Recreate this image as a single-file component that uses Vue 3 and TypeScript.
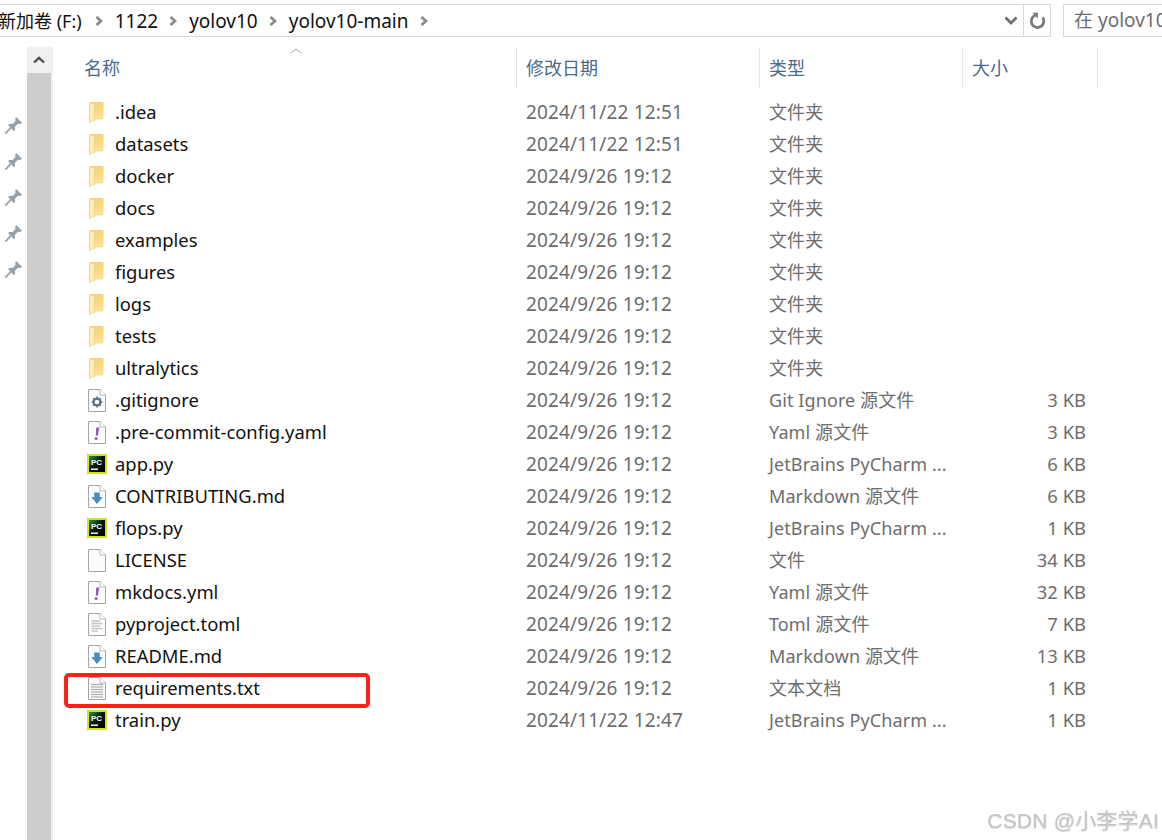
<script setup lang="ts">
interface Row {
  name: string
  date: string
  type: string
  size: string
  icon: string
  marked?: boolean
}
const folderDates: [string, string][] = [
  ['.idea', '2024/11/22 12:51'],
  ['datasets', '2024/11/22 12:51'],
  ['docker', '2024/9/26 19:12'],
  ['docs', '2024/9/26 19:12'],
  ['examples', '2024/9/26 19:12'],
  ['figures', '2024/9/26 19:12'],
  ['logs', '2024/9/26 19:12'],
  ['tests', '2024/9/26 19:12'],
  ['ultralytics', '2024/9/26 19:12'],
]
const d = '2024/9/26 19:12'
const pc = 'JetBrains PyCharm ...'
const rows: Row[] = [
  ...folderDates.map(([name, date]) => ({ name, date, type: '文件夹', size: '', icon: 'folder' })),
  { name: '.gitignore', date: d, type: 'Git Ignore 源文件', size: '3 KB', icon: 'gear' },
  { name: '.pre-commit-config.yaml', date: d, type: 'Yaml 源文件', size: '3 KB', icon: 'bang' },
  { name: 'app.py', date: d, type: pc, size: '6 KB', icon: 'pc' },
  { name: 'CONTRIBUTING.md', date: d, type: 'Markdown 源文件', size: '6 KB', icon: 'md' },
  { name: 'flops.py', date: d, type: pc, size: '1 KB', icon: 'pc' },
  { name: 'LICENSE', date: d, type: '文件', size: '34 KB', icon: 'blank' },
  { name: 'mkdocs.yml', date: d, type: 'Yaml 源文件', size: '32 KB', icon: 'bang' },
  { name: 'pyproject.toml', date: d, type: 'Toml 源文件', size: '7 KB', icon: 'toml' },
  { name: 'README.md', date: d, type: 'Markdown 源文件', size: '13 KB', icon: 'md' },
  { name: 'requirements.txt', date: d, type: '文本文档', size: '1 KB', icon: 'txt', marked: true },
  { name: 'train.py', date: '2024/11/22 12:47', type: pc, size: '1 KB', icon: 'pc' },
]
const crumbs = ['1122', 'yolov10', 'yolov10-main']
const pins = [0, 1, 2, 3, 4]
const headers = [
  { label: '名称', cls: 'h-name' },
  { label: '修改日期', cls: 'h-date' },
  { label: '类型', cls: 'h-type' },
  { label: '大小', cls: 'h-size' },
]
const fileTypes = ['gear', 'bang', 'md', 'blank', 'toml', 'txt']
const lines = [6, 8.5, 11, 13.5, 16, 18.5]
</script>

<template>
  <div class="page">
    <div class="topbar">
      <div class="address">
        <div class="crumbs">
          <span class="crumb drive">新加卷 (F:)</span>
          <svg class="sep" viewBox="0 0 8 10"><path d="M1.5 1 L6 5 L1.5 9" fill="none" stroke="#8a8a8a" stroke-width="2.8" /></svg>
          <template v-for="c in crumbs" :key="c">
            <span class="crumb">{{ c }}</span>
            <svg class="sep" viewBox="0 0 8 10"><path d="M1.5 1 L6 5 L1.5 9" fill="none" stroke="#8a8a8a" stroke-width="2.8" /></svg>
          </template>
        </div>
        <svg class="chev" viewBox="0 0 14 9"><path d="M1.5 1.5 L7 7 L12.5 1.5" fill="none" stroke="#6f6f6f" stroke-width="2.8" /></svg>
        <div class="refresh">
          <svg viewBox="0 0 18 18" width="18" height="18">
            <path d="M7.5 3.2 A6.3 6.3 0 1 0 14.6 5.4" fill="none" stroke="#7c7c7c" stroke-width="2.8" />
            <path d="M4.2 0.8 L10 0.8 L10 6.6 Z" fill="#7c7c7c" />
          </svg>
        </div>
      </div>
      <div class="search">在 yolov10</div>
    </div>

    <div class="body">
      <div class="pins">
        <svg v-for="p in pins" :key="p" class="pin" viewBox="0 0 16 16">
          <path d="M9.8 0.8 L15.2 6 L13.6 7 L11.6 6.8 L8.8 9.6 L9 12.6 L7.8 13.4 L2.8 8.2 L3.6 7 L6.6 7.2 L9.4 4.4 L9 2.4 Z" fill="#96a0a8" />
          <path d="M5 10.6 L0.8 15.2 L1.2 15.6" fill="none" stroke="#96a0a8" stroke-width="1.6" />
        </svg>
      </div>

      <div class="scrollbar">
        <div class="scroll-up">
          <svg viewBox="0 0 12 8" width="12" height="8"><path d="M1 6.5 L6 1.8 L11 6.5" fill="none" stroke="#505050" stroke-width="2.4" /></svg>
        </div>
        <div class="scroll-thumb"></div>
      </div>

      <div class="list">
        <div class="header">
          <svg class="sort" viewBox="0 0 12 6"><path d="M0.5 5.5 L6 0.8 L11.5 5.5" fill="none" stroke="#9aa0a6" stroke-width="1" /></svg>
          <div v-for="h in headers" :key="h.label" class="hcell" :class="h.cls">{{ h.label }}</div>
        </div>
        <div class="rows">
          <div v-for="r in rows" :key="r.name" class="row">
            <div class="ico">
              <svg v-if="r.icon === 'folder'" width="16" height="22" viewBox="0 0 16 22">
                <defs>
                  <linearGradient id="fg" x1="0" y1="0" x2="0" y2="1">
                    <stop offset="0" stop-color="#f6d27a" />
                    <stop offset="1" stop-color="#fbe296" />
                  </linearGradient>
                </defs>
                <path d="M0.5 1 H14.5 V18.5 H0.5 Z" fill="url(#fg)" />
                <path d="M0.5 1.5 L5.5 3 V18.5 L5.5 19 L0.5 21.5 Z" fill="#fdeeb5" stroke="#f0cd72" stroke-width="0.7" />
              </svg>

              <svg v-else-if="fileTypes.includes(r.icon)" width="18" height="23" viewBox="0 0 18 23">
                <path d="M0.5 0.5 H12 L17.5 6 V22.5 H0.5 Z" fill="#fbfcfc" stroke="#a3a6a8" />
                <path d="M12 0.5 V6 H17.5" fill="#fff" stroke="#b5b8ba" />
                <template v-if="r.icon === 'gear'">
                  <circle cx="9" cy="13" r="3.4" fill="none" stroke="#5e7180" stroke-width="2.2" />
                  <path d="M9 7.6 V18.4 M3.6 13 H14.4 M5.2 9.2 L12.8 16.8 M12.8 9.2 L5.2 16.8" stroke="#5e7180" stroke-width="1.6" stroke-dasharray="1.8 7.2" />
                </template>
                <template v-else-if="r.icon === 'bang'">
                  <path d="M8.2 6.5 H11.4 L9.8 14.8 H7.8 Z" fill="#8e5cb8" />
                  <circle cx="8.1" cy="17.6" r="1.5" fill="#8e5cb8" />
                </template>
                <template v-else-if="r.icon === 'md'">
                  <path d="M6.2 7.5 H11.8 V12 H14.8 L9 19 L3.2 12 H6.2 Z" fill="#4f8db8" />
                </template>
                <template v-else-if="r.icon === 'toml'">
                  <path d="M3.5 8 H12 M3.5 10.5 H14.5 M3.5 13 H12 M3.5 15.5 H14.5 M3.5 18 H10" stroke="#c3c6c8" stroke-width="1.3" />
                </template>
                <template v-else-if="r.icon === 'txt'">
                  <path v-for="y in lines" :key="y" :d="`M3 ${y + 1.5} H15`" stroke="#a9acae" stroke-width="1.2" />
                </template>
              </svg>

              <svg v-else width="20" height="20" viewBox="0 0 20 20">
                <defs>
                  <linearGradient id="pg" x1="0" y1="0" x2="1" y2="1">
                    <stop offset="0" stop-color="#17a34a" />
                    <stop offset="0.45" stop-color="#07180e" />
                    <stop offset="1" stop-color="#000" />
                  </linearGradient>
                </defs>
                <rect x="0" y="0" width="20" height="20" fill="#d6e02a" />
                <rect x="2" y="2" width="16" height="16" fill="url(#pg)" />
                <text x="4" y="10.5" class="pc-text">PC</text>
                <rect x="4" y="14.5" width="7" height="1.4" fill="#fff" />
              </svg>
            </div>
            <div class="cell c-name">{{ r.name }}</div>
            <div class="cell c-date">{{ r.date }}</div>
            <div class="cell c-type">{{ r.type }}</div>
            <div class="cell c-size">{{ r.size }}</div>
            <div v-if="r.marked" class="mark"></div>
          </div>
        </div>
      </div>
    </div>

    <div class="watermark">CSDN @小李学AI</div>
  </div>
</template>

<style scoped>
.page {
  position: relative;
  width: 1162px;
  height: 840px;
  overflow: hidden;
  background: #fff;
  display: flex;
  flex-direction: column;
  font-family: "Noto Sans", "Noto Sans CJK SC", sans-serif;
  font-size: 18px;
  color: #111;
}
.topbar {
  display: flex;
  height: 33px;
  margin-top: 4px;
  flex: none;
}
.address {
  width: 1051px;
  display: flex;
  align-items: center;
  border: 1px solid #d9d9d9;
  border-left: none;
  box-sizing: border-box;
}
.crumbs {
  flex: 1;
  display: flex;
  align-items: center;
  margin-left: -2px;
  white-space: nowrap;
  font-size: 19px;
}
.crumb {
  line-height: 30px;
}
.drive {
  font-size: 18px;
  margin-right: 2px;
}
.sep {
  width: 8px;
  height: 10px;
  margin: 0 12px 0 11px;
}
.chev {
  width: 14px;
  height: 9px;
  margin-right: 5px;
}
.refresh {
  width: 26px;
  height: 100%;
  border-left: 1px solid #d9d9d9;
  display: flex;
  align-items: center;
  justify-content: center;
}
.search {
  margin-left: 12px;
  flex: 1;
  border: 1px solid #d9d9d9;
  border-right: none;
  box-sizing: border-box;
  padding-left: 10px;
  line-height: 31px;
  font-size: 19px;
  color: #6d6d6d;
  white-space: nowrap;
  overflow: hidden;
}
.body {
  flex: 1;
  display: flex;
  min-height: 0;
  padding-top: 10px;
}
.pins {
  width: 27px;
  flex: none;
  display: flex;
  flex-direction: column;
  align-items: center;
  gap: 18px;
  padding-top: 69px;
  padding-left: 1px;
  box-sizing: border-box;
}
.pin {
  width: 18px;
  height: 18px;
}
.scrollbar {
  width: 24px;
  flex: none;
  display: flex;
  flex-direction: column;
  border-right: 2px solid #f0f0f0;
  box-sizing: content-box;
}
.scroll-up {
  height: 26px;
  background: #f0f0f0;
  display: flex;
  align-items: center;
  justify-content: center;
}
.scroll-thumb {
  flex: 1;
  background: #cdcdcd;
}
.list {
  flex: 1;
  min-width: 0;
  display: flex;
  flex-direction: column;
}
.header {
  position: relative;
  height: 41px;
  display: flex;
  flex: none;
}
.sort {
  position: absolute;
  left: 237px;
  top: 1px;
  width: 12px;
  height: 6px;
}
.hcell {
  box-sizing: border-box;
  border-right: 1px solid #e5e5e5;
  padding-left: 9px;
  color: #4c6a8a;
  line-height: 42px;
}
.h-name {
  width: 464px;
  padding-left: 31px;
}
.h-date {
  width: 243px;
}
.h-type {
  width: 203px;
}
.h-size {
  width: 135px;
}
.rows {
  padding-top: 8px;
}
.row {
  position: relative;
  height: 32px;
  display: flex;
  align-items: center;
  white-space: nowrap;
}
.ico {
  width: 24px;
  margin-left: 32px;
  margin-right: 6px;
  display: flex;
  align-items: center;
  justify-content: center;
  flex: none;
}
.ico svg {
  display: block;
}
.cell {
  line-height: 32px;
}
.c-name {
  width: 411px;
  font-size: 18.4px;
}
.c-date {
  width: 243px;
  font-size: 19px;
  letter-spacing: 0.15px;
  color: #6d6d6d;
}
.c-type {
  width: 202px;
  letter-spacing: 0.1px;
  color: #6d6d6d;
}
.c-size {
  width: 115px;
  text-align: right;
  font-size: 18.4px;
  color: #6d6d6d;
}
.pc-text {
  font-family: "Liberation Sans", sans-serif;
  font-size: 8px;
  font-weight: 700;
  fill: #fff;
}
.mark {
  position: absolute;
  left: 11px;
  top: 1px;
  width: 306px;
  height: 35px;
  box-sizing: border-box;
  border: 4px solid #ff2117;
  border-radius: 5px;
}
.watermark {
  position: absolute;
  right: 3px;
  bottom: 6px;
  font-size: 21px;
  letter-spacing: 0.2px;
  color: #c4c4c4;
  font-family: "Liberation Sans", "Noto Sans CJK SC", sans-serif;
  text-shadow: 0 1px 1px rgba(120, 120, 120, 0.25);
}
</style>
